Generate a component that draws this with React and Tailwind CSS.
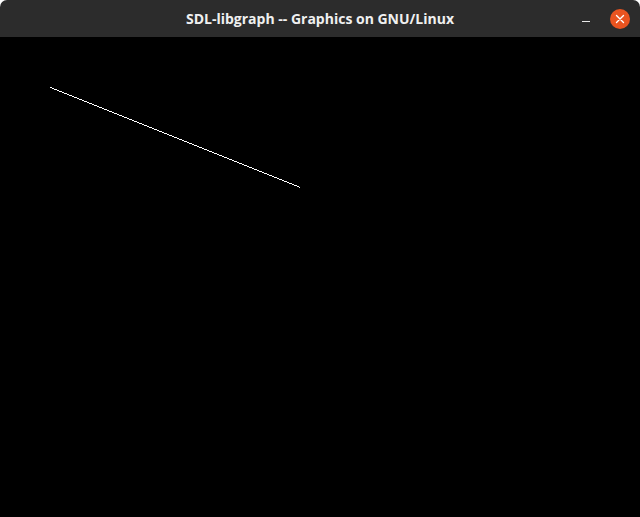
export default function App() {
  return (
    <div className="w-[640px] h-[517px] bg-white flex flex-col overflow-hidden">
      <div className="h-[37px] shrink-0 bg-[#2c2c2c] rounded-t-[7px] relative flex items-center justify-center">
        <span
          className="text-[14px] font-bold text-[#f0f0f0] tracking-[0px]"
          style={{ fontFamily: '"Open Sans", "Noto Sans", sans-serif' }}
        >
          SDL-libgraph -- Graphics on GNU/Linux
        </span>
        <div className="absolute left-[582px] top-[21px] w-[8px] h-[1px] bg-[#e8e8e8]" />
        <div className="absolute left-[610px] top-[9px] w-[20px] h-[20px] rounded-full bg-[#e95420] flex items-center justify-center">
          <svg width="10" height="10" viewBox="0 0 10 10">
            <path d="M1.5 1.5 L8.5 8.5 M8.5 1.5 L1.5 8.5" stroke="#ffffff" strokeWidth="1.4" strokeLinecap="round" />
          </svg>
        </div>
      </div>
      <div className="flex-1 bg-black">
        <svg width="640" height="480" viewBox="0 0 640 480">
          <line x1="50.5" y1="50.5" x2="300.5" y2="150.5" stroke="#ffffff" strokeWidth="1" shapeRendering="crispEdges" />
        </svg>
      </div>
    </div>
  );
}
